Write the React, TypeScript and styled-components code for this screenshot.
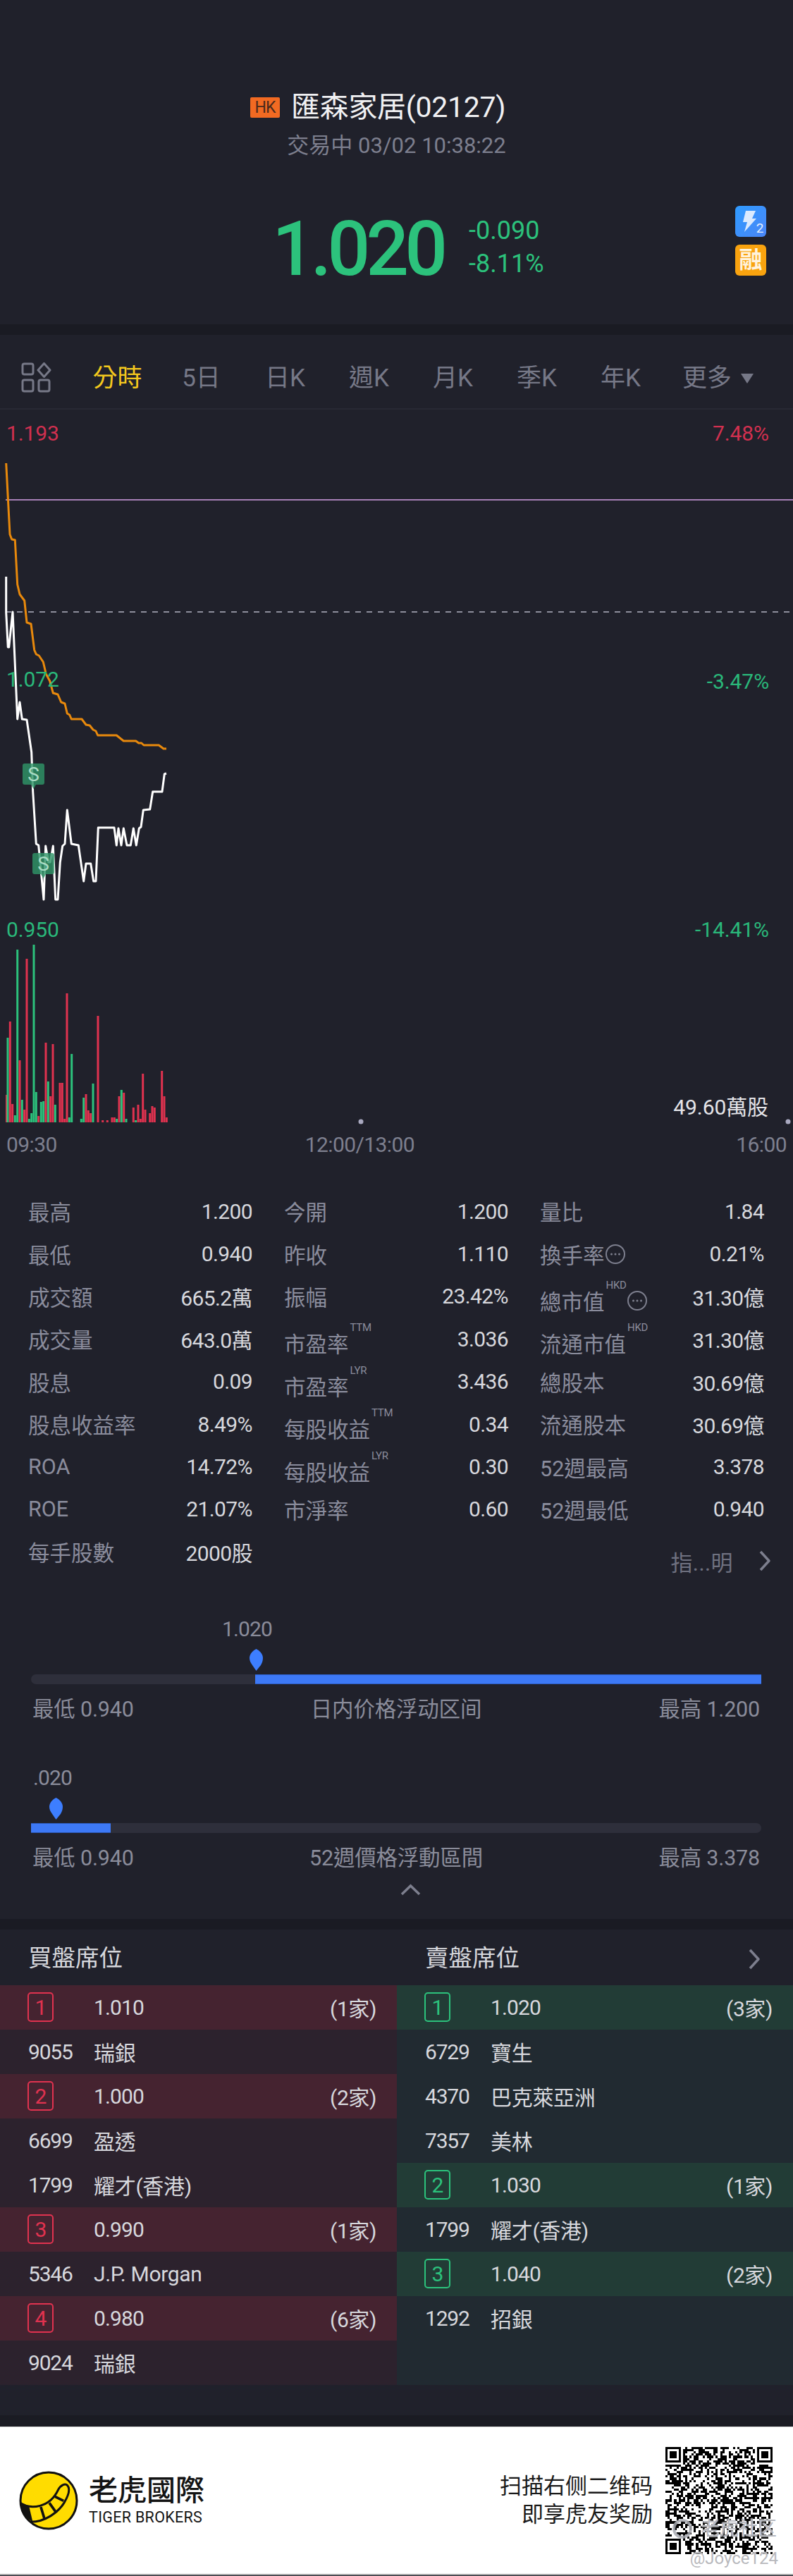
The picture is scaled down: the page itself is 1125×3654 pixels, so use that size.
import React from 'react';
import styled, { createGlobalStyle } from 'styled-components';

const GlobalStyle = createGlobalStyle`
  html, body {
    margin: 0;
    padding: 0;
    background: #20212b;
  }
  body {
    font-family: Roboto, "Noto Sans CJK TC", sans-serif;
  }
  * {
    box-sizing: border-box;
  }
`;

const GREEN = '#2cc27c';
const RED = '#e0324f';

const Page = styled.div`
  width: 1125px;
  height: 3654px;
  overflow: hidden;
  background: #20212b;
`;

/* quote header */
const Header = styled.header`
  height: 460px;
  padding-top: 130px;
`;

const TitleRow = styled.div`
  height: 44px;
  padding-left: 355px;
  display: flex;
  align-items: center;
  gap: 16px;
`;

const MarketTag = styled.span`
  width: 42px;
  height: 29px;
  background: #f26a22;
  border-radius: 2px;
  color: #4a2a1c;
  font-size: 23px;
  letter-spacing: -1px;
  display: flex;
  align-items: center;
  justify-content: center;
`;

const StockName = styled.h1`
  margin: 0;
  font-size: 41px;
  font-weight: 400;
  line-height: 44px;
  letter-spacing: -0.3px;
  color: #f1f1f3;
  white-space: nowrap;
`;

const Status = styled.div`
  margin-top: 16px;
  height: 34px;
  line-height: 34px;
  text-align: center;
  font-size: 31px;
  color: #7d7f8e;
`;

const PriceRow = styled.div`
  position: relative;
  margin-top: 85px;
  height: 90px;
  padding-left: 386px;
  display: flex;
  align-items: center;
`;

const Price = styled.div`
  font-size: 107px;
  font-weight: 500;
  line-height: 90px;
  letter-spacing: -6px;
  color: ${GREEN};
`;

const Changes = styled.div`
  margin: -7px 0 0 36px;
  display: flex;
  flex-direction: column;
  gap: 13px;
  font-size: 36px;
  line-height: 34px;
  color: ${GREEN};
`;

const BadgeStack = styled.div`
  position: absolute;
  right: 38px;
  top: -17px;
  display: flex;
  flex-direction: column;
  gap: 11px;
`;

const FlashBadge = styled.div`
  width: 44px;
  height: 44px;
  border-radius: 6px;
  background: linear-gradient(135deg, #2f9bff 0%, #4a86f7 100%);
`;

const MarginBadge = styled.div`
  width: 44px;
  height: 44px;
  border-radius: 6px;
  background: #f9a30f;
  color: #fff3dc;
  font-size: 33px;
  line-height: 44px;
  font-weight: 700;
  text-align: center;
`;

const SectionGap = styled.div`
  height: 15px;
  background: #1a1b23;
`;

/* period tabs */
const TabBar = styled.nav`
  height: 106px;
  padding: 39px 0 0 30px;
  display: flex;
  align-items: flex-start;
  border-bottom: 2px solid #282934;
`;

const TabIcon = styled.svg`
  width: 43px;
  height: 43px;
  margin-right: 34px;
  flex: none;
`;

const Tab = styled.div<{ $active?: boolean }>`
  width: 119px;
  height: 46px;
  line-height: 46px;
  text-align: center;
  font-size: 35px;
  color: ${p => (p.$active ? '#f4c91d' : '#767887')};
  flex: none;
`;

const MoreTab = styled(Tab)`
  width: auto;
  margin-left: 28px;
  display: flex;
  align-items: center;
  gap: 13px;
`;

const Caret = styled.i`
  width: 0;
  height: 0;
  border-left: 9px solid transparent;
  border-right: 9px solid transparent;
  border-top: 14px solid #767887;
`;

/* intraday chart */
const ChartArea = styled.section`
  position: relative;
  height: 1019px;
`;

const ChartSvg = styled.svg`
  display: block;
  width: 1125px;
  height: 1019px;
`;

const ChartLabel = styled.span<{ $top: number; $left?: number; $right?: number; $color: string }>`
  position: absolute;
  top: ${p => p.$top}px;
  ${p => (p.$left !== undefined ? `left: ${p.$left}px;` : `right: ${p.$right}px;`)}
  font-size: 30px;
  line-height: 30px;
  letter-spacing: -0.1px;
  color: ${p => p.$color};
`;

const TimeAxis = styled.div`
  height: 48px;
  padding: 10px 9px 0;
  display: flex;
  font-size: 30px;
  line-height: 28px;
  letter-spacing: -0.6px;
  color: #7d7f8e;
`;

const MiddleTime = styled.span`
  margin-left: 352px;
`;

const LastTime = styled.span`
  margin-left: auto;
`;

/* statistics table */
const StatGrid = styled.section`
  margin-top: 40px;
  padding: 0 41px 0 40px;
  display: grid;
  grid-template-columns: repeat(3, 318px);
  grid-auto-rows: 60.4px;
  column-gap: 45px;
`;

const StatCell = styled.div`
  display: flex;
  align-items: center;
  justify-content: space-between;
`;

const StatLabel = styled.div<{ $low?: boolean }>`
  position: relative;
  display: flex;
  align-items: center;
  font-size: 30.5px;
  color: #8a8c9c;
  white-space: nowrap;
  ${p => (p.$low ? 'padding-top: 12px;' : '')}
`;

const Superscript = styled.sup`
  align-self: flex-start;
  margin: -7px 0 0 2px;
  font-size: 15px;
  line-height: 15px;
  letter-spacing: -0.3px;
  color: #8a8c9c;
`;

const StatValue = styled.div`
  font-size: 30px;
  letter-spacing: -0.6px;
  color: #d7d8dd;
  white-space: nowrap;
`;

const InfoDots = styled.svg`
  width: 30px;
  height: 30px;
  flex: none;
`;

const GuideLink = styled.div`
  grid-column: 3;
  display: flex;
  justify-content: flex-end;
  align-items: center;
  padding-top: 26px;
  margin-right: -10px;
  font-size: 31px;
  color: #6f7180;
  letter-spacing: 0.4px;
`;

const GuideArrow = styled.svg`
  width: 18px;
  height: 30px;
  margin-left: 36px;
`;

/* price range bars */
const RangeBlock = styled.div<{ $top: number }>`
  margin-top: ${p => p.$top}px;
  padding: 0 45px 0 44px;
`;

const RangeValue = styled.div<{ $left: number }>`
  height: 26px;
  line-height: 26px;
  padding-left: ${p => p.$left}px;
  font-size: 30px;
  letter-spacing: -0.9px;
  color: #8a8c9a;
`;

const PinRow = styled.div<{ $left: number }>`
  height: 51px;
  padding: 15px 0 0 ${p => p.$left}px;
`;

const Pin = styled.svg`
  display: block;
  width: 19px;
  height: 31px;
`;

const Track = styled.div`
  position: relative;
  height: 14px;
  border-radius: 7px;
  background: #2e2f3b;
`;

const TrackFill = styled.div<{ $from: number; $to: number }>`
  position: absolute;
  top: 0;
  bottom: 0;
  left: ${p => p.$from}px;
  right: ${p => p.$to}px;
  background: #3d79f6;
  box-shadow: inset 0 1px 0 #2e5cbe, inset 0 -1px 0 #2e5cbe;
`;

const RangeLabels = styled.div`
  margin-top: 18px;
  height: 30px;
  padding: 0 2px;
  display: flex;
  justify-content: space-between;
  align-items: center;
  font-size: 30.5px;
  letter-spacing: -0.2px;
  color: #8a8c9a;
  white-space: nowrap;
`;

const CollapseRow = styled.div`
  height: 16px;
  margin-top: 24px;
  padding-left: 568px;
`;

const CollapseArrow = styled.svg`
  display: block;
  width: 29px;
  height: 17px;
`;

const BrokerGap = styled.div`
  margin-top: 34px;
  height: 15px;
  background: #1a1b23;
`;

/* broker queue */
const BrokerHeads = styled.div`
  height: 79px;
  display: grid;
  grid-template-columns: 563px 562px;
`;

const BrokerHead = styled.div`
  position: relative;
  padding-left: 40px;
  font-size: 33.5px;
  line-height: 82px;
  color: #d7d8dd;
`;

const HeadArrow = styled.svg`
  position: absolute;
  right: 46px;
  top: 27px;
  width: 18px;
  height: 30px;
`;

const BrokerTable = styled.section`
  display: grid;
  grid-template-columns: 563px 562px;
  height: 567px;
`;

const SideColumn = styled.div<{ $side: 'buy' | 'sell' }>`
  background: ${p => (p.$side === 'buy' ? '#2c222d' : '#212a31')};
`;

const LevelRow = styled.div<{ $side: 'buy' | 'sell' }>`
  height: 63px;
  padding: 0 29px 0 39px;
  display: flex;
  align-items: center;
  font-size: 30px;
  letter-spacing: -0.9px;
  color: #d7d8dd;
  background: ${p => (p.$side === 'buy' ? '#452330' : '#223c36')};
`;

const LevelBadge = styled.span<{ $side: 'buy' | 'sell' }>`
  width: 37px;
  height: 42px;
  margin-right: 57px;
  border: 2px solid ${p => (p.$side === 'buy' ? RED : GREEN)};
  border-radius: 5px;
  color: ${p => (p.$side === 'buy' ? RED : GREEN)};
  display: flex;
  align-items: center;
  justify-content: center;
  flex: none;
`;

const LevelCount = styled.span`
  margin-left: auto;
  font-size: 30px;
  letter-spacing: -0.4px;
`;

const BrokerRow = styled.div`
  height: 63px;
  padding-left: 40px;
  display: flex;
  align-items: center;
  font-size: 30px;
  color: #d7d8dd;
`;

const BrokerCode = styled.span`
  width: 93px;
  letter-spacing: -1.2px;
  flex: none;
`;

const BrokerName = styled.span`
  letter-spacing: -0.3px;
  white-space: nowrap;
`;

const BottomGap = styled.div`
  margin-top: 43px;
  height: 16px;
  background: #1a1b23;
`;

/* promo footer */
const Promo = styled.footer`
  position: relative;
  height: 211px;
  padding: 0 29px 0 27px;
  display: flex;
  align-items: center;
  background: #ffffff;
  border-top: 1px solid #d8d8d8;
  border-bottom: 2px solid #a5a5a5;
`;

const LogoMark = styled.svg`
  width: 84px;
  height: 84px;
  flex: none;
`;

const Brand = styled.div`
  margin-left: 15px;
  display: flex;
  flex-direction: column;
  color: #141414;
`;

const BrandName = styled.div`
  font-size: 41px;
  line-height: 46px;
  font-weight: 500;
`;

const BrandLatin = styled.div`
  margin-top: 3px;
  font-size: 21.5px;
  line-height: 24px;
  letter-spacing: 0.3px;
`;

const ScanText = styled.div`
  margin-left: auto;
  font-size: 31px;
  line-height: 40px;
  text-align: right;
  color: #1a1a1a;
`;

const QrCode = styled.svg`
  width: 152px;
  height: 152px;
  margin-left: 18px;
  flex: none;
`;

const Watermark = styled.span`
  position: absolute;
  left: 950px;
  top: 126px;
  display: flex;
  align-items: center;
  gap: 8px;
  font-size: 27px;
  line-height: 36px;
  color: rgba(168, 170, 178, 0.85);
  text-shadow: 0 0 2px #ffffff, 0 0 2px #ffffff;
  white-space: nowrap;
`;

const WatermarkIcon = styled.svg`
  width: 36px;
  height: 30px;
  flex: none;
`;

const Handle = styled.span`
  position: absolute;
  right: 21px;
  top: 172px;
  font-size: 24px;
  line-height: 28px;
  color: #b9b9bd;
  text-shadow: 0 0 2px #ffffff, 0 0 2px #ffffff;
`;

const ORANGE_LINE =
  '8.7,657 14,758 16.7,765 21.3,766 24.7,829 28,843 34.7,852 38,883 44,885 48.7,922 51.3,928 55.3,930 61.3,939 65.3,956 70.7,966 75.3,983 82,985 86.7,996 92,998 95.3,1012 98.7,1014 101.3,1020 116,1020 122,1028 127.3,1029 132,1035 136,1037 138.7,1043 165.3,1043 175.3,1051 192.7,1051 196.7,1054 200.7,1054 204,1057 225.3,1057 232,1062 236,1062';

const PRICE_LINE =
  '8.7,818 8.7,869 11.3,918 12.7,918 18,868 24.7,1020 28,996 31.3,1020 38,1021 44.7,1067 46.7,1123 51.3,1197 54.7,1199 62,1276 64.7,1200 68.7,1223 71.3,1223 75.3,1200 78.7,1276 82,1276 85.3,1223 88.7,1200 92,1197 95.3,1149 101.3,1197 111.3,1199 118.7,1250 122,1225 128.7,1225 132.7,1250 136,1250 139.3,1174 162,1174 165.3,1199 168,1175 172,1199 175.3,1175 180,1199 185.3,1199 189.3,1175 193.3,1199 197.3,1175 200,1173 203.3,1149 212.7,1148 216.7,1123 230,1123 233.3,1098 236,1097';

// x centre, top edge and direction of every volume bar, baseline at y=1592
const VOLUME: [number, number, 'r' | 'g'][] = [
  [9.5, 1553, 'r'], [11, 1472, 'g'], [14.3, 1449, 'r'], [17.7, 1566, 'r'], [21.3, 1582, 'g'],
  [24.7, 1347, 'g'], [28, 1504, 'r'], [31.3, 1560, 'g'], [34.7, 1574, 'r'], [38, 1360, 'r'],
  [41.3, 1587, 'g'], [44.7, 1579, 'g'], [48, 1340, 'g'], [51.3, 1549, 'g'], [54.7, 1583, 'r'],
  [58.3, 1563, 'g'], [61.7, 1562, 'g'], [65, 1479, 'r'], [68.3, 1534, 'g'], [71.7, 1555, 'r'],
  [75, 1481, 'r'], [78.3, 1567, 'g'], [85, 1536, 'r'], [88.3, 1536, 'r'], [91.7, 1587, 'r'],
  [95, 1409, 'r'], [98.3, 1585, 'g'], [101.7, 1495, 'g'], [115.3, 1587, 'g'], [118.7, 1557, 'g'],
  [122, 1552, 'r'], [125.3, 1575, 'r'], [128.7, 1579, 'r'], [132, 1537, 'g'], [139, 1441, 'r'],
  [145.7, 1589, 'r'], [152.3, 1589, 'r'], [159, 1585, 'r'], [162.3, 1585, 'r'], [165.7, 1587, 'g'],
  [169, 1555, 'r'], [172.3, 1546, 'g'], [175.7, 1550, 'r'], [179, 1587, 'g'], [189.3, 1571, 'r'],
  [192.7, 1589, 'g'], [196, 1567, 'r'], [199.3, 1587, 'r'], [202.7, 1523, 'r'], [206, 1574, 'r'],
  [212.7, 1579, 'r'], [216, 1569, 'r'], [219.3, 1571, 'r'], [229.7, 1519, 'r'], [233, 1555, 'r'],
  [236.3, 1585, 'r'],
];

type Stat = { label: string; value: string; sup?: string; info?: boolean };

const STATS: Stat[] = [
  { label: '最高', value: '1.200' },
  { label: '今開', value: '1.200' },
  { label: '量比', value: '1.84' },
  { label: '最低', value: '0.940' },
  { label: '昨收', value: '1.110' },
  { label: '換手率', value: '0.21%', info: true },
  { label: '成交額', value: '665.2萬' },
  { label: '振幅', value: '23.42%' },
  { label: '總市值', value: '31.30億', sup: 'HKD', info: true },
  { label: '成交量', value: '643.0萬' },
  { label: '市盈率', value: '3.036', sup: 'TTM' },
  { label: '流通市值', value: '31.30億', sup: 'HKD' },
  { label: '股息', value: '0.09' },
  { label: '市盈率', value: '3.436', sup: 'LYR' },
  { label: '總股本', value: '30.69億' },
  { label: '股息收益率', value: '8.49%' },
  { label: '每股收益', value: '0.34', sup: 'TTM' },
  { label: '流通股本', value: '30.69億' },
  { label: 'ROA', value: '14.72%' },
  { label: '每股收益', value: '0.30', sup: 'LYR' },
  { label: '52週最高', value: '3.378' },
  { label: 'ROE', value: '21.07%' },
  { label: '市淨率', value: '0.60' },
  { label: '52週最低', value: '0.940' },
  { label: '每手股數', value: '2000股' },
];

type Queue = ({ level: number; price: string; count: string } | { code: string; name: string })[];

const BUY_QUEUE: Queue = [
  { level: 1, price: '1.010', count: '(1家)' },
  { code: '9055', name: '瑞銀' },
  { level: 2, price: '1.000', count: '(2家)' },
  { code: '6699', name: '盈透' },
  { code: '1799', name: '耀才(香港)' },
  { level: 3, price: '0.990', count: '(1家)' },
  { code: '5346', name: 'J.P. Morgan' },
  { level: 4, price: '0.980', count: '(6家)' },
  { code: '9024', name: '瑞銀' },
];

const SELL_QUEUE: Queue = [
  { level: 1, price: '1.020', count: '(3家)' },
  { code: '6729', name: '寶生' },
  { code: '4370', name: '巴克萊亞洲' },
  { code: '7357', name: '美林' },
  { level: 2, price: '1.030', count: '(1家)' },
  { code: '1799', name: '耀才(香港)' },
  { level: 3, price: '1.040', count: '(2家)' },
  { code: '1292', name: '招銀' },
];

// 49 x 49 module code: finder squares in three corners, seeded fill elsewhere
const buildQrPath = () => {
  const size = 49;
  let seed = 2127;
  let d = '';
  const inFinder = (x: number, y: number) =>
    (x < 8 && y < 8) || (x > size - 9 && y < 8) || (x < 8 && y > size - 9);
  for (let y = 0; y < size; y++) {
    for (let x = 0; x < size; x++) {
      seed = (seed * 1103515245 + 12345) & 0x7fffffff;
      if (!inFinder(x, y) && (seed >> 16) % 100 < 52) d += `M${x} ${y}h1v1h-1z`;
    }
  }
  [[0, 0], [42, 0], [0, 42]].forEach(([x, y]) => {
    d += `M${x} ${y}h7v7h-7zM${x + 1} ${y + 1}v5h5v-5zM${x + 2} ${y + 2}h3v3h-3z`;
  });
  return d;
};

const InfoIcon = () => (
  <InfoDots viewBox="0 0 30 30">
    <circle cx="15" cy="15" r="13" fill="none" stroke="#7d7f8e" strokeWidth="2" />
    <circle cx="9.5" cy="15" r="1.5" fill="#7d7f8e" />
    <circle cx="15" cy="15" r="1.5" fill="#7d7f8e" />
    <circle cx="20.5" cy="15" r="1.5" fill="#7d7f8e" />
  </InfoDots>
);

const SellMarker = ({ x, y }: { x: number; y: number }) => (
  <g>
    <path
      d={`M${x + 3} ${y}h25a3 3 0 0 1 3 3v24a3 3 0 0 1 -3 3h-9l-3.5 6l-3.5 -6h-9a3 3 0 0 1 -3 -3v-24a3 3 0 0 1 3 -3z`}
      fill="#2f9468"
      fillOpacity="0.82"
    />
    <text x={x + 15.5} y={y + 25} textAnchor="middle" fontSize="28" fill="#a9dcc4" fontFamily="Roboto, sans-serif">
      S
    </text>
  </g>
);

const PricePin = () => (
  <Pin viewBox="0 0 19 31">
    <path d="M9.5 0C14 2 19 7 19 13c0 4-1.500 7-3 10L9.500 31 4 23C2 20 0 17 0 13 0 7 5 2 9.500 0z" fill="#3d7eff" />
  </Pin>
);

const ChevronRight = () => (
  <path d="M3 2l12 13L3 28" fill="none" stroke="#7d7f8e" strokeWidth="3.500" strokeLinejoin="round" />
);

const QueueColumn = ({ side, rows }: { side: 'buy' | 'sell'; rows: Queue }) => (
  <SideColumn $side={side}>
    {rows.map((row, i) =>
      'level' in row ? (
        <LevelRow key={i} $side={side}>
          <LevelBadge $side={side}>{row.level}</LevelBadge>
          <span>{row.price}</span>
          <LevelCount>{row.count}</LevelCount>
        </LevelRow>
      ) : (
        <BrokerRow key={i}>
          <BrokerCode>{row.code}</BrokerCode>
          <BrokerName>{row.name}</BrokerName>
        </BrokerRow>
      ),
    )}
  </SideColumn>
);

const App: React.FC = () => {
  return (
    <Page>
      <GlobalStyle />
      <Header>
        <TitleRow>
          <MarketTag>HK</MarketTag>
          <StockName>匯森家居(02127)</StockName>
        </TitleRow>
        <Status>交易中 03/02 10:38:22</Status>
        <PriceRow>
          <Price>1.020</Price>
          <Changes>
            <span>-0.090</span>
            <span>-8.11%</span>
          </Changes>
          <BadgeStack>
            <FlashBadge>
              <svg width="44" height="44" viewBox="0 0 44 44">
                <path d="M15 7h14l-5 11h6L13 37l4-14h-6z" fill="#dbeafe" />
                <text x="35" y="38" fontSize="19" textAnchor="middle" fill="#e6f1ff" fontFamily="Roboto, sans-serif">
                  2
                </text>
              </svg>
            </FlashBadge>
            <MarginBadge>融</MarginBadge>
          </BadgeStack>
        </PriceRow>
      </Header>
      <SectionGap />

      <TabBar>
        <TabIcon viewBox="0 0 43 43" fill="none" stroke="#767887" strokeWidth="3">
          <rect x="2" y="2" width="15" height="15" rx="2.500" />
          <rect x="2" y="25" width="15" height="16" rx="2.500" />
          <rect x="25" y="25" width="15" height="16" rx="2.500" />
          <path d="M32.500 1.500l8.500 9.500-8.500 9.500-8.500-9.500z" strokeLinejoin="round" />
        </TabIcon>
        <Tab $active>分時</Tab>
        <Tab>5日</Tab>
        <Tab>日K</Tab>
        <Tab>週K</Tab>
        <Tab>月K</Tab>
        <Tab>季K</Tab>
        <Tab>年K</Tab>
        <MoreTab>
          更多
          <Caret />
        </MoreTab>
      </TabBar>

      <ChartArea>
        <ChartLabel $top={19} $left={9} $color="#d1304f">1.193</ChartLabel>
        <ChartLabel $top={19} $right={34} $color="#d1304f">7.48%</ChartLabel>
        <ChartLabel $top={368} $left={9} $color="#2ab87a">1.072</ChartLabel>
        <ChartLabel $top={371} $right={34} $color="#2ab87a">-3.47%</ChartLabel>
        <ChartLabel $top={723} $left={9} $color="#2ab87a">0.950</ChartLabel>
        <ChartLabel $top={723} $right={34} $color="#2ab87a">-14.41%</ChartLabel>
        <ChartLabel $top={975} $right={35} $color="#e4e4e8">49.60萬股</ChartLabel>
        <ChartSvg viewBox="0 581 1125 1019">
          <line x1="8" y1="709" x2="1125" y2="709" stroke="#a67fb6" strokeWidth="2" />
          <line x1="8" y1="868" x2="1125" y2="868" stroke="#8d8e9c" strokeWidth="2" strokeDasharray="8 8" />
          <polyline points={PRICE_LINE} fill="none" stroke="#ffffff" strokeWidth="3" strokeLinejoin="round" />
          <polyline points={ORANGE_LINE} fill="none" stroke="#e8890c" strokeWidth="3" strokeLinejoin="round" />
          <SellMarker x={32} y={1083} />
          <SellMarker x={46} y={1210} />
          {VOLUME.map(([x, top, dir], i) => (
            <rect key={i} x={x - 1.5} y={top} width="3" height={1592 - top} fill={dir === 'r' ? RED : GREEN} />
          ))}
          <circle cx="512" cy="1591" r="3.500" fill="#a9a9c0" />
          <circle cx="1118" cy="1591" r="3.500" fill="#a9a9c0" />
        </ChartSvg>
      </ChartArea>
      <TimeAxis>
        <span>09:30</span>
        <MiddleTime>12:00/13:00</MiddleTime>
        <LastTime>16:00</LastTime>
      </TimeAxis>

      <StatGrid>
        {STATS.map((s, i) => (
          <StatCell key={i}>
            <StatLabel $low={!!s.sup}>
              {s.label}
              {s.sup && <Superscript>{s.sup}</Superscript>}
              {s.info && <InfoIcon />}
            </StatLabel>
            <StatValue>{s.value}</StatValue>
          </StatCell>
        ))}
        <GuideLink>
          指...明
          <GuideArrow viewBox="0 0 18 30">
            <ChevronRight />
          </GuideArrow>
        </GuideLink>
      </StatGrid>

      <RangeBlock $top={66}>
        <RangeValue $left={271}>1.020</RangeValue>
        <PinRow $left={310}>
          <PricePin />
        </PinRow>
        <Track>
          <TrackFill $from={318} $to={0} />
        </Track>
        <RangeLabels>
          <span>最低 0.940</span>
          <span>日内价格浮动区间</span>
          <span>最高 1.200</span>
        </RangeLabels>
      </RangeBlock>

      <RangeBlock $top={72}>
        <RangeValue $left={3}>.020</RangeValue>
        <PinRow $left={26}>
          <PricePin />
        </PinRow>
        <Track>
          <TrackFill $from={0} $to={923} />
        </Track>
        <RangeLabels>
          <span>最低 0.940</span>
          <span>52週價格浮動區間</span>
          <span>最高 3.378</span>
        </RangeLabels>
      </RangeBlock>
      <CollapseRow>
        <CollapseArrow viewBox="0 0 29 17">
          <path d="M2 15L14.500 3 27 15" fill="none" stroke="#7d7f8e" strokeWidth="3.500" />
        </CollapseArrow>
      </CollapseRow>
      <BrokerGap />

      <BrokerHeads>
        <BrokerHead>買盤席位</BrokerHead>
        <BrokerHead>
          賣盤席位
          <HeadArrow viewBox="0 0 18 30">
            <ChevronRight />
          </HeadArrow>
        </BrokerHead>
      </BrokerHeads>
      <BrokerTable>
        <QueueColumn side="buy" rows={BUY_QUEUE} />
        <QueueColumn side="sell" rows={SELL_QUEUE} />
      </BrokerTable>
      <BottomGap />

      <Promo>
        <LogoMark viewBox="0 0 250 250">
          <circle cx="125" cy="125" r="119" fill="#ffdc00" stroke="#111" strokeWidth="9" />
          <path d="M5 135C50 165 130 155 165 80c10-20 30-30 40-18 13 16 0 48-15 73-25 40-80 80-140 80" fill="none" stroke="#111" strokeWidth="9" />
          <path d="M4 132l38 16 16 68C28 198 8 168 4 132z" fill="#111" />
          <path d="M92 152l16 52M128 135l30 42M152 108l36 18" stroke="#111" strokeWidth="11" fill="none" />
        </LogoMark>
        <Brand>
          <BrandName>老虎國際</BrandName>
          <BrandLatin>TIGER BROKERS</BrandLatin>
        </Brand>
        <ScanText>
          扫描右侧二维码
          <br />
          即享虎友奖励
        </ScanText>
        <QrCode viewBox="0 0 49 49" shapeRendering="crispEdges">
          <path d={buildQrPath()} fill="#000" fillRule="evenodd" />
        </QrCode>
        <Watermark>
          <WatermarkIcon viewBox="0 0 36 30">
            <circle cx="18" cy="15" r="12" fill="none" stroke="rgba(168,170,178,0.85)" strokeWidth="4" />
          </WatermarkIcon>
          老虎社区
        </Watermark>
        <Handle>@Joyce124</Handle>
      </Promo>
    </Page>
  );
};

export default App;
